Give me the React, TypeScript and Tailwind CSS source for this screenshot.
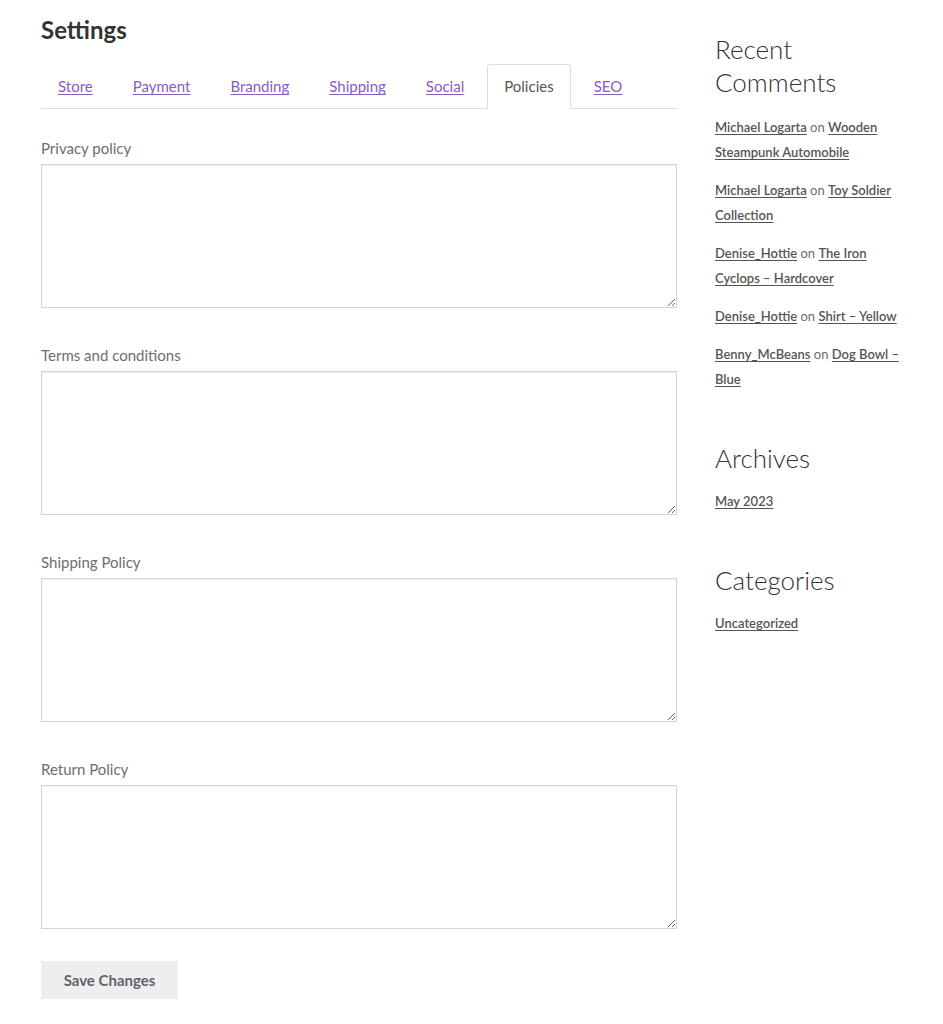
import React from "react";

const tabs = ["Store", "Payment", "Branding", "Shipping", "Social", "Policies", "SEO"];
const fields = ["Privacy policy", "Terms and conditions", "Shipping Policy", "Return Policy"];

const comments: { author: string; post: string }[] = [
  { author: "Michael Logarta", post: "Wooden Steampunk Automobile" },
  { author: "Michael Logarta", post: "Toy Soldier Collection" },
  { author: "Denise_Hottie", post: "The Iron Cyclops – Hardcover" },
  { author: "Denise_Hottie", post: "Shirt – Yellow" },
  { author: "Benny_McBeans", post: "Dog Bowl – Blue" },
];

export default function App() {
  return (
    <div className="min-h-screen bg-white font-['Lato',sans-serif] text-[#6d6d6d]">
      <div className="flex pl-[41px] gap-[38px]">
        <main className="w-[636px] shrink-0">
          <h1 className="mt-[14px] text-[24px] leading-[32px] font-bold text-[#333333]">Settings</h1>
          <ul className="mt-[18px] flex border-b border-[#dddddd]">
            {tabs.map((t) => (
              <li key={t} className="mr-[6px] -mb-px">
                {t === "Policies" ? (
                  <span className="flex h-[45px] items-center rounded-t-[4px] border border-[#dddddd] border-b-white bg-white px-4 text-[15px] text-[#555555]">
                    {t}
                  </span>
                ) : (
                  <a
                    href="#"
                    className="flex h-[45px] items-center border border-transparent px-4 text-[15px] text-[#8a5cc4] underline underline-offset-2"
                  >
                    {t}
                  </a>
                )}
              </li>
            ))}
          </ul>
          <form className="mt-[27px]">
            {fields.map((f) => (
              <div key={f} className="mb-[35px]">
                <label className="block text-[15px] leading-[24px] text-[#6d6d6d]">{f}</label>
                <textarea className="mt-[4px] block h-[144px] w-full border border-[#d4d4d4] bg-white shadow-[inset_0_1px_1px_rgba(0,0,0,0.06)] outline-none" />
              </div>
            ))}
            <button
              type="button"
              className="-mt-[3px] h-[38px] w-[137px] bg-[#eeeeee] text-[15px] font-bold text-[#60646c]"
            >
              Save Changes
            </button>
          </form>
        </main>
        <aside className="w-[192px] shrink-0 pt-[33px]">
          <section className="mb-[50px]">
            <h2 className="text-[26px] leading-[33px] font-light text-[#333333]">Recent Comments</h2>
            <ul className="mt-[16px] text-[13px] leading-[25px]">
              {comments.map((c, i) => (
                <li key={i} className="mb-[13px]">
                  <a href="#" className="font-semibold text-[#555555] underline underline-offset-2">{c.author}</a>{" "}
                  <span className="text-[#6d6d6d]">on</span>{" "}
                  <a href="#" className="font-semibold text-[#555555] underline underline-offset-2">{c.post}</a>
                </li>
              ))}
            </ul>
          </section>
          <section className="mb-[50px]">
            <h2 className="text-[26px] leading-[33px] font-light text-[#333333]">Archives</h2>
            <ul className="mt-[14px] text-[13px] leading-[25px]">
              <li>
                <a href="#" className="font-semibold text-[#555555] underline underline-offset-2">May 2023</a>
              </li>
            </ul>
          </section>
          <section>
            <h2 className="text-[26px] leading-[33px] font-light text-[#333333]">Categories</h2>
            <ul className="mt-[14px] text-[13px] leading-[25px]">
              <li>
                <a href="#" className="font-semibold text-[#555555] underline underline-offset-2">Uncategorized</a>
              </li>
            </ul>
          </section>
        </aside>
      </div>
    </div>
  );
}
